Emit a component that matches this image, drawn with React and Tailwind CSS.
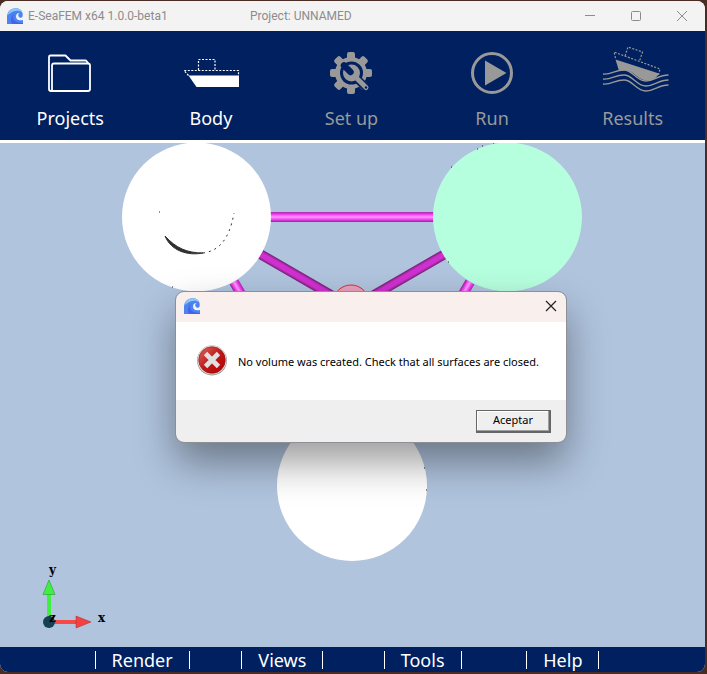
import { useState } from 'react'

const steps = [
  { label: 'Projects', icon: FolderIcon, enabled: true },
  { label: 'Body', icon: HullIcon, enabled: true },
  { label: 'Set up', icon: GearIcon, enabled: false },
  { label: 'Run', icon: RunIcon, enabled: false },
  { label: 'Results', icon: SailingIcon, enabled: false },
]

const menus = ['Render', 'Views', 'Tools', 'Help']

function WaveIcon() {
  return (
    <svg className="w-4 h-4 shrink-0" viewBox="0 0 16 16" aria-hidden="true">
      <path d="M0 16V9C0 4 3.5 0.5 8 0.3c4.500 0 7.300 2 7.700 5.700.2 1.500-.2 3-1 4 .2.700.6 1 1.300 1V16z" fill="#4b83f0" />
      <path d="M0.500 7.500C1.500 3.500 4 0.500 8 0.300c4 0 6.500 1.500 7.400 4C13 2.500 9.500 2.300 7 3.300 4.500 4.200 2.500 5.500 0.500 7.500z" fill="#8cc8f5" />
      <path d="M7.500 5C5.500 7.500 5.500 11 8 13c2 1.500 5 2 8 2v1H5C3 12 4.500 7.500 7.500 5z" fill="#4563ea" />
      <path d="M9 8.500C9 6 10.500 5 12.500 5c-1.600 1-1.800 3-.2 4.300 1 .8 2.700.6 3.700-.3v3c-1 .4-2 .3-3 .3-2.500 0-4-1.800-4-3.800z" fill="#f3f3f5" />
    </svg>
  )
}

function FolderIcon() {
  return (
    <svg width="70" height="50" viewBox="0 0 70 50" fill="none" stroke="currentColor" strokeWidth="1.8" strokeLinejoin="round" aria-hidden="true">
      <path d="M54 15l-3-3.500H35.500L30.500 6.500H15.500q-1.500 0-1.500 1.500V40q0 2 2 2h37q2 0 2-2V16.500q0-2-2-2H19q-2 0-2 2V41" />
    </svg>
  )
}

function HullIcon() {
  return (
    <svg width="70" height="50" viewBox="0 0 70 50" aria-hidden="true">
      <path d="M12.500 26.500H63V38H20.500z" fill="currentColor" />
      <path d="M12.500 26.500L8 21.500H62.500V27M22.500 21V10.500H39V21" fill="none" stroke="currentColor" strokeWidth="1.2" strokeDasharray="2 1.5" />
    </svg>
  )
}

function GearIcon() {
  return (
    <svg width="70" height="50" viewBox="0 0 70 50" aria-hidden="true">
      <g fill="currentColor">
        <circle cx="35" cy="24" r="16" />
        <rect x="31" y="3" width="8" height="42" rx="2" />
        <rect x="31" y="3" width="8" height="42" rx="2" transform="rotate(45 35 24)" />
        <rect x="31" y="3" width="8" height="42" rx="2" transform="rotate(90 35 24)" />
        <rect x="31" y="3" width="8" height="42" rx="2" transform="rotate(135 35 24)" />
      </g>
      <circle cx="35.500" cy="24" r="11.500" fill="#00205f" />
      <path d="M36 25L51 39.500" stroke="#00205f" strokeWidth="8" strokeLinecap="round" />
      <circle cx="35.500" cy="24" r="8.500" fill="currentColor" />
      <path d="M28 16.500L34.500 23" stroke="#00205f" strokeWidth="6.500" strokeLinecap="round" />
      <path d="M39 27.500L50 38.500" stroke="currentColor" strokeWidth="5" strokeLinecap="round" />
      <circle cx="50" cy="38.500" r="1.200" fill="#00205f" />
    </svg>
  )
}

function RunIcon() {
  return (
    <svg width="70" height="50" viewBox="0 0 70 50" aria-hidden="true">
      <circle cx="35" cy="24" r="19.500" fill="none" stroke="currentColor" strokeWidth="3" />
      <path d="M28 11.500L49.500 24 28 36.500z" fill="currentColor" />
    </svg>
  )
}

function SailingIcon() {
  return (
    <svg className="overflow-visible" width="70" height="50" viewBox="0 0 70 50" fill="none" stroke="currentColor" aria-hidden="true">
      <path d="M17.500 10.500L61 24.500c-2 4-6 7-12 7-9 0-13-10-22-10.500l-6 1z" fill="currentColor" stroke="none" />
      <path d="M17.500 9L16 3l46 17-1.500 6M27 7l3-9 14.500 5-3 9" strokeWidth="1.200" strokeDasharray="2 1.5" />
      <path d="M5 25c8 1 12-4 21-4 9 0 12 11 22 11 9 0 12-6 22.500-6M5 30c8 1 12-4 21-4 9 0 12 11 22 11 9 0 12-6 22.500-6M5 35c8 1 12-4 21-4 9 0 12 11 22 11 9 0 12-6 22.500-6" strokeWidth="1.300" />
    </svg>
  )
}

function ErrorIcon() {
  return (
    <svg className="w-8 h-8 shrink-0" viewBox="0 0 32 32" aria-hidden="true">
      <defs>
        <linearGradient id="errorRed" x1="0" y1="0" x2="1" y2="1">
          <stop offset="0" stopColor="#e06a62" />
          <stop offset="0.5" stopColor="#c01818" />
          <stop offset="1" stopColor="#b80000" />
        </linearGradient>
      </defs>
      <circle cx="16" cy="16.500" r="15" fill="#8f8f8f" />
      <circle cx="16" cy="16" r="14.500" fill="#e4e0e0" />
      <circle cx="16" cy="16" r="13.300" fill="url(#errorRed)" stroke="#8c1414" strokeWidth="0.6" />
      <path d="M9.500 9.500l13 13M22.500 9.500l-13 13" stroke="#e0e0e0" strokeWidth="4.800" />
    </svg>
  )
}

function Scene() {
  return (
    <svg className="absolute inset-0 w-full h-full" viewBox="0 143 705 504" preserveAspectRatio="xMidYMid slice" role="img" aria-label="Platform model">
      <defs>
        <linearGradient id="brace" x1="0" y1="0" x2="0" y2="1">
          <stop offset="0" stopColor="#a030a0" />
          <stop offset="0.2" stopColor="#f030f0" />
          <stop offset="0.5" stopColor="#ff9cff" />
          <stop offset="0.8" stopColor="#f030f0" />
          <stop offset="1" stopColor="#803080" />
        </linearGradient>
        <linearGradient id="darkBrace" x1="0" y1="0" x2="0" y2="1">
          <stop offset="0" stopColor="#702070" />
          <stop offset="0.3" stopColor="#d030d0" />
          <stop offset="0.7" stopColor="#d030d0" />
          <stop offset="1" stopColor="#702070" />
        </linearGradient>
      </defs>
      <rect x="260" y="212" width="180" height="10" fill="url(#brace)" />
      <rect x="0" y="-5" width="120" height="10" fill="url(#darkBrace)" transform="translate(260 254) rotate(30)" />
      <rect x="0" y="-5" width="120" height="10" fill="url(#darkBrace)" transform="translate(445 254) rotate(150)" />
      <rect x="0" y="-5" width="200" height="10" fill="url(#brace)" transform="translate(234 282) rotate(60)" />
      <rect x="0" y="-5" width="200" height="10" fill="url(#brace)" transform="translate(470 282) rotate(120)" />
      <circle cx="351" cy="303" r="18" fill="#e8a0bc" stroke="#d83030" />
      <circle cx="196.500" cy="217" r="74.500" fill="#fff" />
      <circle cx="507.500" cy="217" r="74.500" fill="#b6ffde" />
      <circle cx="352" cy="486" r="75" fill="#fff" />
      <path d="M165 236c11 12 22 17 38 17-15 3-32-2-38-17z" fill="#303030" stroke="#303030" />
      <path d="M203 253c15-2 26-12 31-40" fill="none" stroke="#303030" strokeDasharray="2 4" />
      <path d="M159 212h1M172 287h1M451 167h1M477 149h1M482 146h1M493 143h1M448 262h1M424 468h1M426 490h1" stroke="#222" />
      <path d="M49 621V594" stroke="#40f040" strokeWidth="4" />
      <path d="M49 580l6 14.500H43z" fill="#40f040" stroke="#208828" strokeWidth="0.5" />
      <path d="M49 622h28" stroke="#f84848" strokeWidth="4" />
      <path d="M91 622l-15-6v12z" fill="#f84040" stroke="#983038" strokeWidth="0.5" />
      <circle cx="49" cy="622" r="6" fill="#173f55" />
      <g className="font-['DejaVu_Serif',serif] text-xs font-bold">
        <text x="49" y="574">y</text>
        <text x="98" y="622">x</text>
        <text x="49" y="622">z</text>
      </g>
    </svg>
  )
}

function ErrorDialog({ onClose }) {
  return (
    <div role="alertdialog" aria-labelledby="errorText" className="absolute left-44 top-[149px] w-[390px] rounded-lg overflow-hidden bg-white outline outline-[#8d8f94] shadow-[0_20px_40px_0_rgba(0,0,0,0.4)]">
      <div className="h-[30px] flex items-center justify-between pl-2 pr-[7px] pb-0.5 bg-[#f9f0ed]">
        <WaveIcon />
        <button type="button" aria-label="Close" onClick={onClose} className="w-4 h-4 grid place-items-center">
          <svg width="12" height="12" viewBox="0 0 12 12" stroke="#222" strokeWidth="1.2" aria-hidden="true">
            <path d="M1 1l10 10M11 1L1 11" />
          </svg>
        </button>
      </div>
      <div className="h-[78px] flex items-center gap-2.5 px-5 pb-0.5">
        <ErrorIcon />
        <p id="errorText" className="pt-1 text-[11px] text-black whitespace-nowrap">
          No volume was created. Check that all surfaces are closed.
        </p>
      </div>
      <div className="h-[42px] flex items-center justify-end pr-[15px] bg-[#efefef]">
        <button type="button" onClick={onClose}
          className="w-[75px] h-[23px] border border-b-2 border-r-2 border-[#666] text-[11px] text-black shadow-[inset_-1px_-1px_0_#a0a0a0,inset_1px_1px_0_#fff]">
          Aceptar
        </button>
      </div>
    </div>
  )
}

export default function App() {
  const [showError, setShowError] = useState(true)

  return (
    <div className="h-screen bg-[#4a2c24] pt-px pr-0.5 pb-0.5 font-['Noto_Sans',sans-serif]">
      <div className="h-full flex flex-col rounded-lg overflow-hidden bg-white">
        <header className="h-[30px] shrink-0 flex items-center pl-[7px] bg-[#f3f3f3] font-['Roboto',sans-serif] text-xs text-[#8c8c8c]">
          <div className="w-[243px] flex items-center gap-[5px]">
            <WaveIcon />
            <span>E-SeaFEM x64 1.0.0-beta1</span>
          </div>
          <span>Project: UNNAMED</span>
          <div className="ml-auto flex">
            <button type="button" aria-label="Minimize" className="w-[46px] h-[30px] grid place-items-center">
              <svg width="10" height="10" viewBox="0 0 10 10" stroke="currentColor" aria-hidden="true"><path d="M0 4.500h10" /></svg>
            </button>
            <button type="button" aria-label="Maximize" className="w-[46px] h-[30px] grid place-items-center">
              <svg width="10" height="10" viewBox="0 0 10 10" fill="none" stroke="currentColor" aria-hidden="true"><rect x="0.500" y="0.500" width="9" height="9" rx="1" /></svg>
            </button>
            <button type="button" aria-label="Close window" className="w-[46px] h-[30px] grid place-items-center">
              <svg width="10" height="10" viewBox="0 0 10 10" stroke="currentColor" aria-hidden="true"><path d="M0 0l10 10M10 0L0 10" /></svg>
            </button>
          </div>
        </header>

        <nav className="h-[109px] shrink-0 grid grid-cols-5 pr-0.5 bg-[#00205f]">
          {steps.map(({ label, icon: Icon, enabled }) => (
            <button key={label} type="button" disabled={!enabled}
              className="flex flex-col items-center pt-[18px] text-lg text-white disabled:text-[#999]">
              <Icon />
              <span className="mt-[5px]">{label}</span>
            </button>
          ))}
        </nav>

        <main className="relative flex-1 mt-[3px] bg-[#b0c4de]">
          <Scene />
          {showError && <ErrorDialog onClose={() => setShowError(false)} />}
        </main>

        <footer className="h-[25px] shrink-0 grid grid-cols-4 px-[72px] bg-[#00205f] text-lg leading-6 text-white">
          {menus.map((menu) => (
            <div key={menu} className="flex items-center justify-center gap-4">
              <span className="w-px h-[18px] bg-white" />
              <button type="button">{menu}</button>
              <span className="w-px h-[18px] bg-white" />
            </div>
          ))}
        </footer>
      </div>
    </div>
  )
}
